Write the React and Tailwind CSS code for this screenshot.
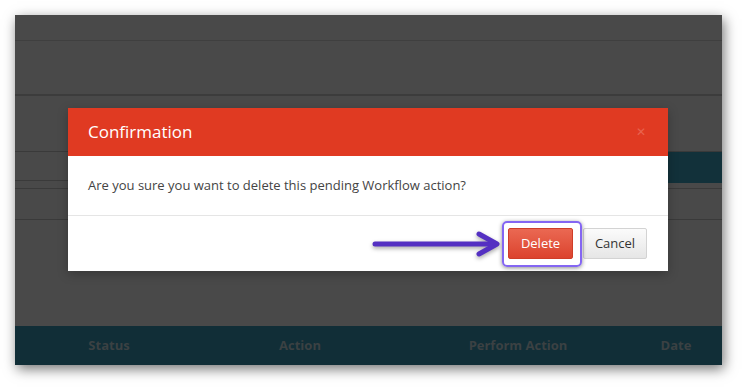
import React from 'react';

const columns = [
    { label: 'Status', width: 'w-[188px]' },
    { label: 'Action', width: 'w-[194px]' },
    { label: 'Perform Action', width: 'w-[242px]' },
    { label: 'Date', width: 'w-[74px]' },
];

function Arrow() {
    return (
        <svg
            className="absolute left-[303px] top-[15px] drop-shadow-[0_2px_2px_rgba(0,0,0,0.35)]"
            width="132"
            height="26"
            viewBox="0 0 132 26"
        >
            <line x1="4" y1="13" x2="124" y2="13" stroke="#5430c2" strokeWidth="5" strokeLinecap="round" />
            <polyline
                points="108,3 126,13 108,23"
                fill="none"
                stroke="#5430c2"
                strokeWidth="5"
                strokeLinecap="round"
                strokeLinejoin="round"
            />
        </svg>
    );
}

function ConfirmModal() {
    return (
        <div className="absolute left-[53px] top-[93px] w-[600px] bg-white shadow-[0_3px_10px_rgba(0,0,0,0.25)]">
            <div className="h-[48px] bg-[#e03a22] px-[20px] flex items-center justify-between">
                <span className="text-[17px] text-white">Confirmation</span>
                <span className="text-[12px] leading-none text-[#e9634f] mr-[2px]">✕</span>
            </div>
            <div className="h-[60px] px-[20px] flex items-center text-[13px] text-[#444] border-b border-[#e5e5e5]">
                Are you sure you want to delete this pending Workflow action?
            </div>
            <div className="relative h-[55px] pr-[21px] flex items-center justify-end gap-[10px]">
                <Arrow />
                <div className="relative">
                    <div className="absolute -left-[6px] -right-[9px] -top-[7px] -bottom-[8px] rounded-[5px] border-[2.5px] border-[#8466f2] shadow-[0_1px_4px_rgba(0,0,0,0.45)]"></div>
                    <button className="relative h-[31px] w-[65px] rounded-[2px] border border-[#cf3d28] bg-gradient-to-b from-[#ea6852] to-[#dc422d] text-[13px] font-medium text-white">
                        Delete
                    </button>
                </div>
                <button className="h-[31px] w-[64px] rounded-[2px] border border-[#d3d3d3] bg-gradient-to-b from-[#fbfbfb] to-[#e6e6e6] text-[13px] text-[#333]">
                    Cancel
                </button>
            </div>
        </div>
    );
}

export default function App() {
    return (
        <div className="w-[747px] h-[390px] bg-white pt-[15px] pl-[15px] font-['Open_Sans',sans-serif]">
            <div className="relative w-[707px] h-[350px] bg-[#494949] flex flex-col shadow-[2px_4px_12px_rgba(0,0,0,0.55)]">
                <div className="h-[26px] border-b border-[#3f3f3f]"></div>
                <div className="h-[55px] border-b-2 border-[#3c3c3c]"></div>
                <div className="h-[56px] border-b border-[#3a3a3a]"></div>
                <div className="h-[29px] border-b border-[#3a3a3a] flex justify-end">
                    <div className="w-[320px] h-[31px] bg-[#12313a]"></div>
                </div>
                <div className="h-[8px] border-b border-[#3a3a3a]"></div>
                <div className="h-[31px] border-b border-[#3a3a3a]"></div>
                <div className="flex-1"></div>
                <div className="h-[39px] bg-[#112e37] flex items-center">
                    {columns.map((col) => (
                        <div key={col.label} className={`${col.width} text-center text-[13px] font-bold text-[#3b4143]`}>
                            {col.label}
                        </div>
                    ))}
                </div>
                <ConfirmModal />
            </div>
        </div>
    );
}
